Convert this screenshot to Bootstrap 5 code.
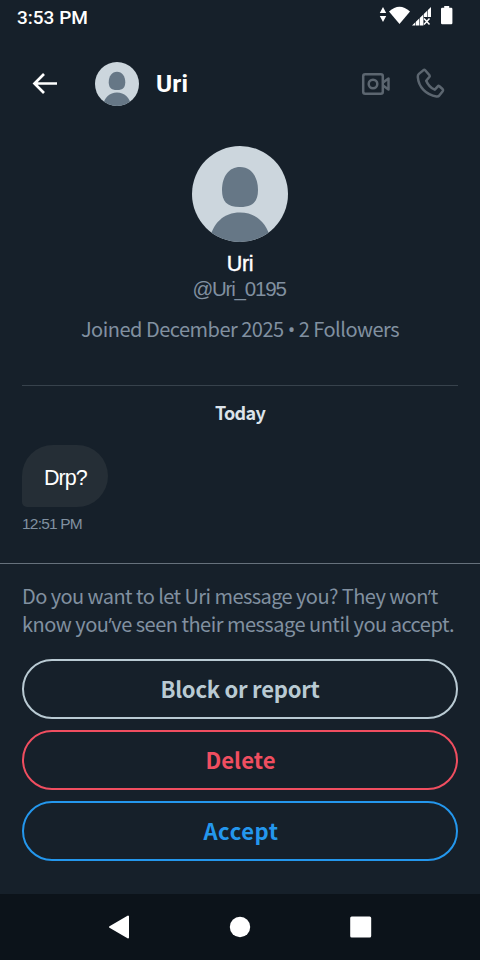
<!DOCTYPE html>
<html lang="en" data-bs-theme="dark">
<head>
<meta charset="utf-8">
<meta name="viewport" content="width=device-width, initial-scale=1">
<title>Message request</title>
<link href="https://cdn.jsdelivr.net/npm/bootstrap@5.3.0/dist/css/bootstrap.min.css" rel="stylesheet">
<style>
body{background:#16202a;color:#fff;font-family:"Noto Sans CJK SC","Open Sans",sans-serif}
.screen{height:960px;overflow:hidden}
.screen svg{display:block;flex:none}
.t{white-space:nowrap}
.grotesk{font-family:"Liberation Sans",Arial,sans-serif}
.punct{font-family:"Open Sans",sans-serif;line-height:1}
.soft{color:#8190a0}
.status{height:34px;padding:0 26px 0 17px;font:500 19px/36px Roboto,sans-serif}
.topbar{height:100px;padding:0 34px 0 31px}
.title{font:700 24.5px/30px Roboto,sans-serif;letter-spacing:.2px;margin-left:17px}
.profile{height:251px;padding-top:12px}
.name{font-size:21.5px;line-height:24px;margin-top:10px;letter-spacing:-.4px;-webkit-text-stroke:.4px}
.handle{font-size:20.5px;line-height:26px;letter-spacing:-1.2px;padding-right:2px}
.joined{font-size:20px;line-height:28px;margin-top:13px;letter-spacing:-.5px}
.rule{height:1px;background:#37424c}
.thread{padding:0 22px;height:178px}
.today{font-size:18px;line-height:28px;margin-top:12px;color:#dce3ea;letter-spacing:-.7px}
.bubble{width:86px;height:62px;background:#252e36;border-radius:31px 31px 31px 5px;margin-top:19px;padding-left:22px;font-size:21.5px;line-height:66px;letter-spacing:-1px}
.time{font-size:15.5px;line-height:20px;margin-top:7px;letter-spacing:-.8px}
.ask{height:331px;border-top:1px solid #66717c;padding:18px 22px 0}
.question{font-size:20px;line-height:28px;letter-spacing:-.56px}
.question .line-two{letter-spacing:-.5px}
.actions{gap:11px;margin-top:21px}
.actions .btn{height:60px;padding:0 0 3px;border:2px solid currentColor;font-size:22px;font-weight:700;line-height:50px;letter-spacing:-.25px}
.actions .c-delete{letter-spacing:.1px;padding-left:1px}
.actions .c-accept{letter-spacing:.6px;padding-left:2px}
.c-block{color:#b9cad3}.c-delete{color:#f04e60}.c-accept{color:#2497ed}
.navkeys{height:66px;background:#0c131a;padding:0 108px}
</style>
</head>
<body>
<div class="screen d-flex flex-column">
  <div class="status d-flex justify-content-between">
    <span class="t" id="clock">3:53 PM</span>
    <svg width="76" height="34" viewBox="378 0 76 34" fill="#fff">
      <path d="M383 7l3.200 6h-6.400zM383 22l3.200-6h-6.400z"/>
      <path d="M389 11.500Q399.500 2 410 11.500L399.500 24z"/>
      <path d="M412 25.500L431 7v10h-7v8.500z"/>
      <path d="M415.500 21v5M419.500 17v9M423.500 13v13M427.500 9v8" stroke="#16202a" stroke-width=".6"/>
      <path d="M424 18.500l5.500 6M429.500 18.500l-5.500 6" stroke="#fff" stroke-width="1.500"/>
      <path d="M441 9q0-1.200 1.200-1.200h2V6h5v1.800h2q1.200 0 1.200 1.200v14q0 1.200-1.200 1.200h-9q-1.200 0-1.200-1.200z"/>
    </svg>
  </div>
  <div class="topbar d-flex align-items-center">
    <svg width="64" height="28" viewBox="31 70 64 28" fill="none" stroke="#fff" stroke-width="2.700"><path d="M57 83.500H35M44 74l-9.500 9.500L44 93"/></svg>
    <svg width="44" height="44" viewBox="0 0 96 96"><use href="#person"/></svg>
    <span class="title t">Uri</span>
    <svg class="ms-auto" width="86" height="36" viewBox="360 65.500 86 36" fill="none" stroke="#5c6670" stroke-width="2.500" stroke-linejoin="round">
      <rect x="363.200" y="73.700" width="19.600" height="19.600" rx="2"/><circle cx="373" cy="83.500" r="4.300"/>
      <path d="M383 82l5.500-4v11l-5.500-4"/>
      <path d="M425.200 69.800L429.500 74.800Q430 75.600 429.500 76.300L426.200 80.200Q428.800 86.500 434.800 89.200L437.800 85.800Q438.500 85 439.400 85.700L442.500 88.500Q443.600 89.600 442.700 90.800L439.300 95Q438.500 96.200 436.500 96C426 94.500 418.500 86.500 417.800 76.500Q417.700 74.500 418.900 73.400L423.500 69.600Q424.400 68.900 425.200 69.800Z"/>
    </svg>
  </div>
  <div class="profile d-flex flex-column align-items-center">
    <svg width="96" height="96" viewBox="0 0 96 96">
      <defs><clipPath id="disc"><circle cx="48" cy="48" r="48"/></clipPath></defs>
      <g id="person" clip-path="url(#disc)">
        <rect width="96" height="96" fill="#ccd6dd"/>
        <path d="M48 21C37 21 30 30.500 30 44C30 55 34.500 61 48 61S66 55 66 44C66 30.500 59 21 48 21Z" fill="#667786"/>
        <path d="M17 96C20 77 32 66.500 48 66.500S76 77 79 96Z" fill="#667786"/>
      </g>
    </svg>
    <div class="name grotesk t">Uri</div>
    <div class="handle grotesk soft t">@Uri_0195</div>
    <div class="joined soft t">Joined December 2025 <span class="punct">•</span> 2 Followers</div>
  </div>
  <div class="thread">
    <div class="rule"></div>
    <div class="today fw-bold text-center">Today</div>
    <div class="bubble grotesk t">Drp?</div>
    <div class="time grotesk soft">12:51 PM</div>
  </div>
  <div class="ask flex-shrink-0">
    <div class="question soft t">Do you want to let Uri message you? They won<span class="punct">’</span>t<br><span class="line-two">know you<span class="punct">’</span>ve seen their message until you accept.</span></div>
    <div class="actions d-grid">
      <button class="btn rounded-pill c-block">Block or report</button>
      <button class="btn rounded-pill c-delete">Delete</button>
      <button class="btn rounded-pill c-accept">Accept</button>
    </div>
  </div>
  <div class="navkeys d-flex align-items-center justify-content-between flex-shrink-0">
    <svg width="22" height="24" viewBox="0 0 22 24"><path d="M20 1.500v21L2 12z" fill="#fff" stroke="#fff" stroke-width="2" stroke-linejoin="round"/></svg>
    <svg width="22" height="22" viewBox="0 0 22 22"><circle cx="11" cy="11" r="10.200" fill="#fff"/></svg>
    <svg width="22" height="22" viewBox="0 0 22 22"><rect x=".2" y=".5" width="21" height="21" rx="1.500" fill="#fff"/></svg>
  </div>
</div>
<script src="https://cdn.jsdelivr.net/npm/bootstrap@5.3.0/dist/js/bootstrap.bundle.min.js"></script>
</body>
</html>
